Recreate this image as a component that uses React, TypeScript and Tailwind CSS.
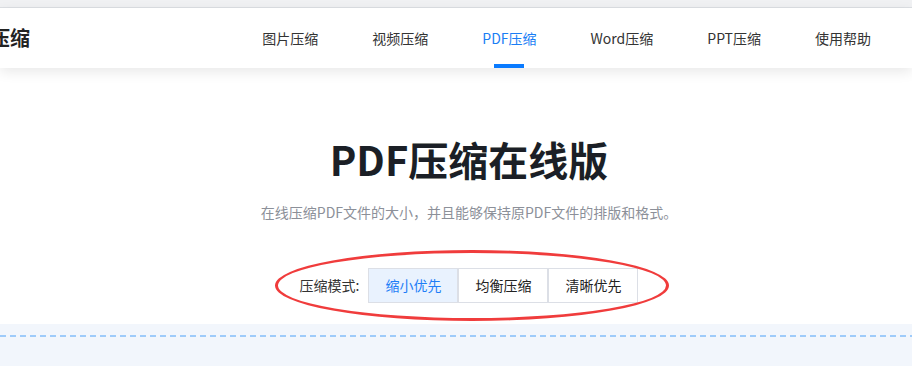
const navItems = ["图片压缩", "视频压缩", "PDF压缩", "Word压缩", "PPT压缩", "使用帮助"];
const modes = ["缩小优先", "均衡压缩", "清晰优先"];

export default function App() {
  const active = "PDF压缩";
  const mode = "缩小优先";

  return (
    <div
      className="h-[366px] w-[912px] overflow-hidden bg-white"
      style={{ fontFamily: '"Noto Sans CJK SC", "Noto Sans", sans-serif' }}
    >
      {/* top strip */}
      <div className="h-[7px] bg-[#f0f1f3]" />
      <div className="h-px bg-[#dcdfe3]" />

      {/* header */}
      <header className="relative z-10 flex h-[60px] items-center justify-between bg-white shadow-[0_4px_12px_rgba(0,0,0,0.09)]">
        <div className="ml-[-10px] text-[20px] font-bold leading-none text-[#222]">压缩</div>
        <nav className="mr-[41px] flex h-full gap-[54px]">
          {navItems.map((item) => (
            <a
              key={item}
              className={`relative flex h-full items-center text-[14px] ${
                item === active ? "text-[#1a7ef5]" : "text-[#333]"
              }`}
            >
              {item}
              {item === active && (
                <span className="absolute bottom-0 left-1/2 h-[4px] w-[30px] -translate-x-1/2 bg-[#0a7bff]" />
              )}
            </a>
          ))}
        </nav>
      </header>

      {/* hero */}
      <main className="flex flex-col items-center pl-[26px] pt-[63px] pb-[21px]">
        <h1 className="text-[40px] font-bold leading-[56px] text-[#1b1f26]">PDF压缩在线版</h1>
        <p className="mt-[15px] text-[14px] leading-[20px] text-[#8c9099]">
          在线压缩PDF文件的大小，并且能够保持原PDF文件的排版和格式。
        </p>

        <div className="relative mt-[46px] flex items-center">
          <span className="mr-[9px] text-[14px] text-[#333]">压缩模式:</span>
          {modes.map((m) => (
            <button
              key={m}
              className={`h-[35px] w-[90px] border border-[#dcdfe6] text-[14px] ${
                m === mode ? "bg-[#e9f2fe] text-[#1e7ef7]" : "bg-white text-[#222]"
              }`}
            >
              {m}
            </button>
          ))}
          {/* annotation */}
          <div className="pointer-events-none absolute left-[-25px] top-[-18px] h-[71px] w-[394px] rounded-[50%] border-[3px] border-[#f03c3c]" />
        </div>
      </main>

      {/* drop area */}
      <section className="h-[60px] bg-[#f2f6fc] pt-[11px]">
        <div className="h-[2px] bg-[repeating-linear-gradient(90deg,#9ecbfa_0_6px,transparent_6px_10px)]" />
      </section>
    </div>
  );
}
